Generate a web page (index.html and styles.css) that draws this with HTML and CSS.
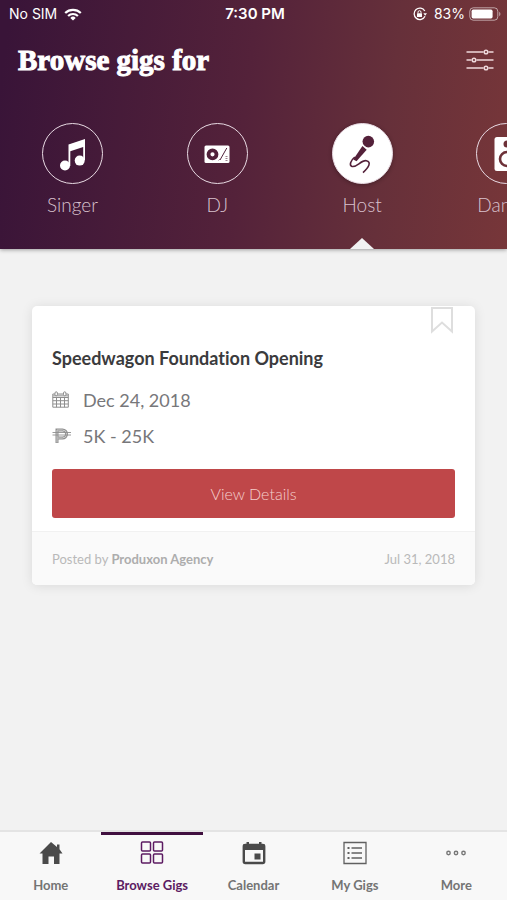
FILE: index.html
```html
<!DOCTYPE html>
<html lang="en">
<head>
<meta charset="utf-8">
<meta name="viewport" content="width=device-width, initial-scale=1">
<title>Browse gigs</title>
<link rel="stylesheet" href="styles.css">
</head>
<body>
<header class="header">
  <div class="status">
    <div class="status-side">
      <span>No SIM</span>
      <svg width="18" height="13" viewBox="0 0 18 13" fill="none" stroke="#fff" stroke-width="2.2"><path d="M1.2 5a11.2 11.2 0 0 1 15.6 0M4.1 8a7 7 0 0 1 9.8 0"/><path d="M9 12.6 6.3 9.9a3.9 3.9 0 0 1 5.4 0z" fill="#fff" stroke="none"/></svg>
    </div>
    <span class="clock">7:30 PM</span>
    <div class="status-side status-right">
      <svg width="14" height="14" viewBox="0 0 14 14" fill="none" stroke="#fff" stroke-width="1.3"><path d="M11.8 4A5.7 5.7 0 1 0 12 9.3"/><path d="M10.4 6.2h3.6l-1.8 2.6z" fill="#fff" stroke="none"/><rect x="4" y="6.2" width="5" height="3.8" rx=".5" fill="#fff" stroke="none"/><path d="M5 6.4V5.2a1.5 1.5 0 0 1 3 0v1.2" stroke-width="1"/></svg>
      <span>83%</span>
      <svg width="32" height="14" viewBox="0 0 32 14"><rect x=".8" y=".8" width="28" height="12.4" rx="3.5" fill="none" stroke="#fff" stroke-opacity=".55"/><rect x="2.6" y="2.6" width="21" height="8.8" rx="1.6" fill="#fff"/><path d="M30.2 4.8a2.6 2.6 0 0 1 0 4.4z" fill="#fff" fill-opacity=".55"/></svg>
    </div>
  </div>
  <div class="title-row">
    <h1>Browse gigs for</h1>
    <button class="filter" type="button" aria-label="Filter">
      <svg width="28" height="22" viewBox="0 0 28 22" fill="none" stroke="#efd9dc" stroke-width="1.5"><path d="M.5 3H17.5M22.500 3H27.500M.5 11H5.500M10.500 11H27.500M.5 19H17.500M22.500 19H27.500"/><circle cx="20" cy="3" r="1.800"/><circle cx="8" cy="11" r="1.800"/><circle cx="20" cy="19" r="1.800"/></svg>
    </button>
  </div>
  <nav class="categories" aria-label="Categories">
    <a class="category" href="#singer">
      <span class="disc"><svg width="60" height="60" viewBox="0 0 60 60" fill="#fff"><path d="M26.500 20.500 43 15v21h-1.800V23L28.300 27.200V42h-1.800z"/><circle cx="23" cy="41.500" r="5"/><circle cx="37.700" cy="36.600" r="5"/></svg></span>
      <span>Singer</span>
    </a>
    <a class="category" href="#dj">
      <span class="disc"><svg width="60" height="60" viewBox="0 0 60 60"><rect x="17.500" y="21.500" width="25" height="17.500" rx="1.500" fill="#fff"/><circle cx="25.500" cy="30.300" r="4" fill="#fff" stroke="#51213a" stroke-width="3.800"/><path d="m33 36 6.800-12" stroke="#51213a" stroke-width="1" fill="none"/><path d="M38.500 32.500h2M38.500 34.500h2M38.500 36.500h2M33 35l-1.500 1.500" stroke="#80606f" stroke-width=".8"/></svg></span>
      <span>DJ</span>
    </a>
    <a class="category active" href="#host" aria-current="true">
      <span class="disc"><svg width="60" height="60" viewBox="0 0 60 60" fill="#54213a"><circle cx="36.300" cy="17.600" r="5.800"/><path d="m30.400 22 4.300 3.700L24.500 37.200l-3.200-1.700z"/><path d="m30.800 20.700 5 4.500" stroke="#fff" stroke-width=".8"/><path d="M22.800 33c-4.200 3.500-5.600 8-3.200 9.300 4.400 2.200 9.500-6.500 14.700-5.600 5.600 1.500 2.300 6.800-3.300 12" fill="none" stroke="#54213a" stroke-width="1.600"/></svg></span>
      <span>Host</span>
    </a>
    <a class="category" href="#dance">
      <span class="disc"><svg width="60" height="60" viewBox="0 0 60 60"><rect x="17.500" y="13" width="25" height="34" rx="2.500" fill="#fff"/><circle cx="30" cy="20" r="3.500" fill="#6d3138"/><circle cx="30" cy="35" r="7" fill="#fff" stroke="#6d3138" stroke-width="2.600"/></svg></span>
      <span>Dancer</span>
    </a>
  </nav>
</header>

<main class="content">
  <article class="card">
    <button class="bookmark" type="button" aria-label="Save gig"><svg width="24" height="28" viewBox="0 0 24 28" fill="none" stroke="#dedede" stroke-width="2"><path d="M2 2h20v23.500l-10-9-10 9z"/></svg></button>
    <div class="card-body">
      <h2>Speedwagon Foundation Opening</h2>
      <p class="detail">
        <svg width="20" height="20" viewBox="0 0 20 20" fill="none" stroke="#8e8e8e" stroke-width="1"><path d="M.8 4h15.500v13.200H.8zM.8 7.500h15.500M.8 10.700h15.500M.8 14h15.500M4.500 7.500v9.700M8.500 7.500v9.700M12.500 7.500v9.700"/><path d="M1 5.500h15" stroke-width="2" stroke="#b5b5b5"/><rect x="3" y="1.800" width="2.400" height="4" rx="1.200" fill="#fff"/><rect x="11.500" y="1.800" width="2.400" height="4" rx="1.200" fill="#fff"/></svg>
        <span>Dec 24, 2018</span>
      </p>
      <p class="detail">
        <svg width="20" height="20" viewBox="0 0 20 20" fill="none" stroke="#8e8e8e"><path d="M5 17V4h5.500a4 4 0 0 1 0 8H5.500" stroke-width="3"/><path d="M5 16.500V4h5.500a4 4 0 0 1 0 8H5.500" stroke="#cfcfcf" stroke-width="1"/><path d="M.5 6.500h18.500M.5 9h18.500" stroke-width=".9"/></svg>
        <span>5K - 25K</span>
      </p>
      <button class="primary" type="button">View Details</button>
    </div>
    <footer class="card-footer">
      <span>Posted by <strong>Produxon Agency</strong></span>
      <time datetime="2018-07-31">Jul 31, 2018</time>
    </footer>
  </article>
</main>

<nav class="tabs" aria-label="Main">
  <a class="tab" href="#home">
    <svg width="24" height="24" viewBox="0 0 24 24" fill="#4a4a4a"><path d="M12 1 18 6V3.500h2.500v4.800L23.500 12.500H20.500V23h-5.500v-7.500H9.500V23H3.500V12.500H.5z"/></svg>
    <span>Home</span>
  </a>
  <a class="tab current" href="#browse" aria-current="page">
    <svg width="24" height="24" viewBox="0 0 24 24" fill="none" stroke="#5c1b62" stroke-width="1.500"><rect x="1.500" y="1" width="9" height="9" rx="1"/><rect x="13.500" y="1" width="9" height="9" rx="1"/><rect x="1.500" y="13" width="9" height="9" rx="1"/><rect x="13.500" y="13" width="9" height="9" rx="1"/></svg>
    <span>Browse Gigs</span>
  </a>
  <a class="tab" href="#calendar">
    <svg width="24" height="24" viewBox="0 0 24 24"><rect x="1.800" y="4" width="20.400" height="18" rx="1.500" fill="none" stroke="#4a4a4a" stroke-width="2.400"/><path d="M1 3.500h22V9H1zM4.500 1H7v3H4.500zM17 1h2.500v3H17zM12.500 12.500h6v6h-6z" fill="#4a4a4a"/></svg>
    <span>Calendar</span>
  </a>
  <a class="tab" href="#gigs">
    <svg width="24" height="24" viewBox="0 0 24 24" fill="none" stroke="#606060" stroke-width="1.300"><path d="M1 1.500h22v21H1zM8.500 7H19M8.500 12H19M8.500 17H19"/><path d="M4.500 7h2M4.500 12h2M4.500 17h2" stroke-width="2"/></svg>
    <span>My Gigs</span>
  </a>
  <a class="tab" href="#more">
    <svg width="24" height="24" viewBox="0 0 24 24" fill="none" stroke="#777" stroke-width="1.400"><circle cx="4.500" cy="12" r="1.700"/><circle cx="12" cy="12" r="1.700"/><circle cx="19.500" cy="12" r="1.700"/></svg>
    <span>More</span>
  </a>
</nav>
</body>
</html>
```
FILE: styles.css
```css
* {
  box-sizing: border-box;
}

body {
  display: flex;
  flex-direction: column;
  min-height: 100vh;
  margin: 0;
  background: #f2f2f2;
  color: #77777a;
  font-family: Lato, "Liberation Sans", sans-serif;
  font-variant-ligatures: none;
}

h1, h2, p {
  margin: 0;
}

a {
  color: inherit;
  text-decoration: none;
}

button {
  padding: 0;
  border: 0;
  background: none;
  font: inherit;
}

svg {
  display: block;
  flex: none;
}

.header {
  padding-bottom: 32px;
  overflow: hidden;
  background: linear-gradient(97deg, #391438 2%, #54223a 48%, #66303a 75%, #773639 100%);
  box-shadow: 0 1px 4px rgba(0, 0, 0, .35);
  color: #fff;
}

.status {
  display: flex;
  align-items: center;
  height: 28px;
  padding: 0 6px 0 9px;
  font: 14px/20px Inter, "Liberation Sans", sans-serif;
}

.status-side {
  display: flex;
  flex: 1;
  align-items: center;
  gap: 7px;
}

.status-right {
  justify-content: flex-end;
}

.status-right svg:last-child {
  margin-left: -3px;
}

.clock {
  font-size: 15px;
  font-weight: 600;
}

.title-row {
  display: flex;
  align-items: center;
  justify-content: space-between;
  height: 63px;
  padding: 0 13px 0 18px;
}

h1 {
  font: 900 29px/32px "Liberation Serif", serif;
  -webkit-text-stroke: 1px #fff;
}

.categories {
  display: flex;
  padding-top: 32px;
}

.category {
  position: relative;
  display: flex;
  flex: 0 0 calc(100% * 2 / 7);
  flex-direction: column;
  align-items: center;
  gap: 8px;
  color: #d9c2ce;
  font-size: 19px;
  font-weight: 300;
  line-height: 25px;
}

.disc {
  display: flex;
  align-items: center;
  justify-content: center;
  width: 61px;
  height: 61px;
  border: 1px solid #e8dae3;
  border-radius: 50%;
}

.active .disc {
  background: #fff;
  box-shadow: 0 1px 4px rgba(0, 0, 0, .3);
}

.active::after {
  position: absolute;
  bottom: -32px;
  border: 12px solid transparent;
  border-top: 0;
  border-bottom: 11px solid #f2f2f2;
  content: "";
}

.content {
  flex: 1;
  padding: 57px 32px;
}

.card {
  position: relative;
  overflow: hidden;
  border-radius: 5px;
  background: #fff;
  box-shadow: 0 1px 12px rgba(0, 0, 0, .1);
}

.bookmark {
  position: absolute;
  top: 0;
  right: 21px;
}

.card-body {
  padding: 40px 20px 13px;
}

h2 {
  margin-bottom: 11px;
  color: #3b3b3d;
  font-size: 18px;
  font-weight: 700;
  line-height: 25px;
}

.detail {
  display: flex;
  align-items: center;
  gap: 11px;
  height: 36px;
  font-size: 18px;
}

.primary {
  display: block;
  width: 100%;
  height: 49px;
  margin-top: 15px;
  border-radius: 3px;
  background: #bf4749;
  color: #f5cfcc;
  font-size: 16px;
  font-weight: 300;
}

.card-footer {
  display: flex;
  align-items: center;
  justify-content: space-between;
  height: 54px;
  padding: 0 20px;
  border-top: 1px solid #f1f1f1;
  background: #fafafa;
  color: #b9b9b9;
  font-size: 13px;
}

.card-footer strong {
  color: #adadad;
}

.tabs {
  display: flex;
  border-top: 2px solid #e4e4e4;
  background: #f8f8f8;
}

.tab {
  display: flex;
  flex: 1;
  flex-direction: column;
  align-items: center;
  gap: 10px;
  height: 68px;
  padding-top: 9px;
  color: #747474;
  font-size: 13px;
  font-weight: 700;
  line-height: 20px;
}

.current {
  padding-top: 6px;
  border-top: 3px solid #40103f;
  color: #5c1b62;
}
```
